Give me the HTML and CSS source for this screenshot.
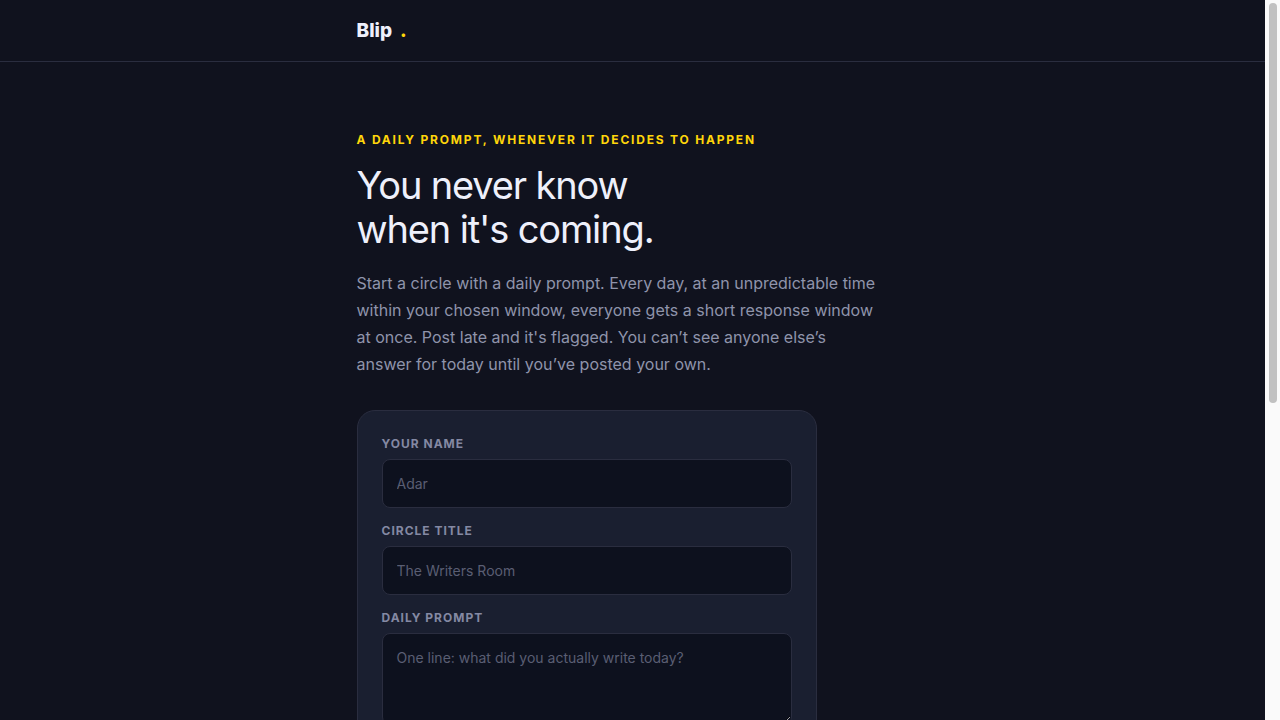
FILE: index.html
```html
<!DOCTYPE html>
<html lang="en">
  <head>
    <meta charset="UTF-8" />
    <meta name="viewport" content="width=device-width, initial-scale=1.0" />
    <title>Blip</title>
    <link rel="stylesheet" href="styles.css">
  </head>
  <body>
    <div class="page">
      <header class="site-header">
        <div class="container brand">
          <span>Blip</span>
          <span class="dot">.</span>
        </div>
      </header>

      <main class="container hero">
        <p class="eyebrow">A daily prompt, whenever it decides to happen</p>
        <h1>You never know<br />when it's coming.</h1>
        <p class="lede">
          Start a circle with a daily prompt. Every day, at an unpredictable
          time within your chosen window, everyone gets a short response window
          at once. Post late and it's flagged. You can’t see anyone else’s
          answer for today until you’ve posted your own.
        </p>

        <form class="card">
          <label for="name">Your name</label>
          <input type="text" id="name" placeholder="Adar" />

          <label for="title">Circle title</label>
          <input type="text" id="title" placeholder="The Writers Room" />

          <label for="prompt">Daily prompt</label>
          <textarea
            id="prompt"
            placeholder="One line: what did you actually write today?"
          ></textarea>
        </form>
      </main>
    </div>

    <div class="scrollbar" aria-hidden="true">
      <div class="thumb"></div>
    </div>
  </body>
</html>
```

FILE: styles.css
```css
* {
  box-sizing: border-box;
}

body {
  display: flex;
  height: 100vh;
  margin: 0;
  font-family: Inter, "Liberation Sans", sans-serif;
  font-size: 16px;
  background-color: #10121e;
  color: #eef0fb;
}

.page {
  flex: 1;
  min-width: 0;
  overflow-y: auto;
  scrollbar-width: none;
}

.scrollbar {
  width: 15px;
  padding: 3px 3px 3px 4px;
  background-color: #fafafa;
}

.thumb {
  height: 56%;
  border-radius: 4px;
  background-color: #c1c1c1;
}

.container {
  max-width: 600px;
  margin: 0 auto;
  padding: 0 24px;
}

.site-header {
  padding: 18px 0;
  border-bottom: 1px solid #2a2d3f;
}

.brand {
  display: flex;
  gap: 8px;
  font-size: 19px;
  line-height: 25px;
  font-weight: 800;
}

.dot {
  color: #ffd60a;
}

.hero {
  padding-top: 68px;
  padding-bottom: 80px;
}

.eyebrow {
  margin: 0 0 14px;
  font-size: 12px;
  line-height: 19px;
  font-weight: 700;
  letter-spacing: 0.15em;
  text-transform: uppercase;
  color: #ffd60a;
}

h1 {
  margin: 0 0 19px;
  font-size: 38px;
  line-height: 44px;
  font-weight: 400;
  letter-spacing: -0.03em;
}

.lede {
  margin: 0 0 32px;
  max-width: 520px;
  font-size: 16px;
  line-height: 27px;
  color: #8f94ab;
}

.card {
  max-width: 460px;
  padding: 24px;
  border: 1px solid #2a2d3f;
  border-radius: 18px;
  background-color: #1a1f30;
}

label {
  display: block;
  margin-bottom: 6px;
  font-size: 12px;
  line-height: 18px;
  font-weight: 700;
  letter-spacing: 1px;
  text-transform: uppercase;
  color: #8489a3;
}

input,
textarea {
  display: block;
  width: 100%;
  margin-bottom: 14px;
  padding: 14px;
  border: 1px solid #2a2d3f;
  border-radius: 8px;
  background-color: #0d111e;
  color: #eef0fb;
  font-family: inherit;
  font-size: 14px;
  line-height: 19px;
}

textarea {
  min-height: 92px;
  resize: vertical;
}

input::placeholder,
textarea::placeholder {
  color: #5a5e73;
}
```
